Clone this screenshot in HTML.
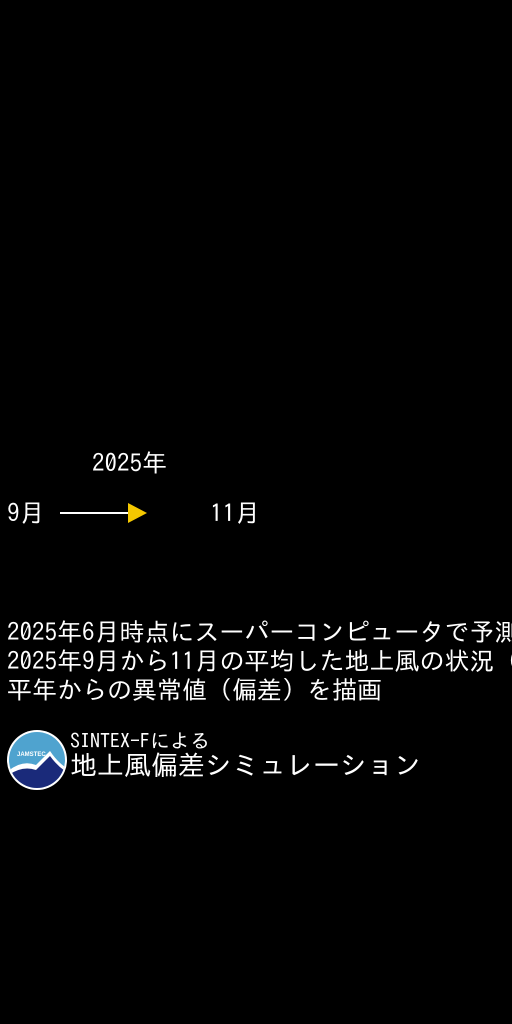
<html><head><style>
body{margin:0;background:#000;width:512px;height:1024px;overflow:hidden;position:relative;font-family:"IPAGothic","Liberation Sans","Noto Sans CJK JP",sans-serif;color:#fff}
.t{position:absolute;white-space:nowrap;line-height:1}
</style></head><body>
<div class="t" style="left:92px;top:451px;font-size:25px">2025年</div>
<div class="t" style="left:7px;top:501px;font-size:25px">9月</div>
<div class="t" style="left:210px;top:501px;font-size:25px">11月</div>
<div style="position:absolute;left:60px;top:512px;width:70px;height:2px;background:#fff"></div>
<svg style="position:absolute;left:126px;top:502px" width="24" height="22"><polygon points="2,1 21,11 2,21" fill="#f5c800"/></svg>
<div class="t" style="left:7px;top:620px;font-size:25px">2025年6月時点にスーパーコンピュータで予測</div>
<div class="t" style="left:7px;top:649px;font-size:25px">2025年9月から11月の平均した地上風の状況（</div>
<div class="t" style="left:7px;top:678px;font-size:25px">平年からの異常値（偏差）を描画</div>
<svg style="position:absolute;left:6px;top:729px" width="62" height="62" viewBox="0 0 62 62">
<defs><clipPath id="c"><circle cx="31" cy="31" r="28"/></clipPath></defs>
<circle cx="31" cy="31" r="30" fill="#fff"/>
<g clip-path="url(#c)">
<rect width="62" height="62" fill="#4fa3cf"/>
<path d="M0,44 Q15,30 30,36 Q40,26 44,22 Q52,34 62,40 V62 H0Z" fill="#fff"/>
<path d="M0,48 Q15,36 30,41 Q40,31 44,27 Q52,38 62,44 V62 H0Z" fill="#1a2a7a"/>
</g>
<text x="11" y="27" font-size="6" fill="#fff" font-family="Liberation Sans" font-weight="bold">JAMSTEC</text>
</svg>
<div class="t" style="left:70px;top:751px;font-size:20px;top:731px">SINTEX-Fによる</div>
<div class="t" style="left:70px;top:752px;font-size:27px;letter-spacing:0px">地上風偏差シミュレーション</div>
</body></html>
